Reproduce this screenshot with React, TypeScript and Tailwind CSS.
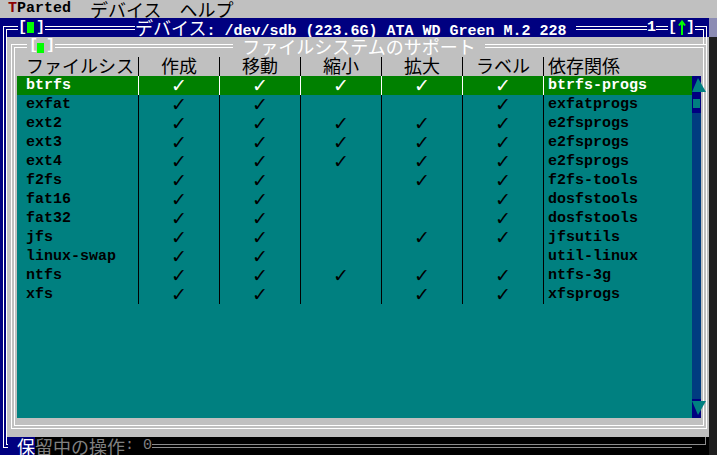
import React from 'react';

const mono = "font-['Liberation_Mono',monospace]";
const jp = "font-['Noto_Sans_CJK_JP',sans-serif]";

type Fs = { name: string; caps: boolean[]; dep: string };

const Y = true;
const N = false;

const rows: Fs[] = [
  { name: 'btrfs', caps: [Y, Y, Y, Y, Y], dep: 'btrfs-progs' },
  { name: 'exfat', caps: [Y, Y, N, N, Y], dep: 'exfatprogs' },
  { name: 'ext2', caps: [Y, Y, Y, Y, Y], dep: 'e2fsprogs' },
  { name: 'ext3', caps: [Y, Y, Y, Y, Y], dep: 'e2fsprogs' },
  { name: 'ext4', caps: [Y, Y, Y, Y, Y], dep: 'e2fsprogs' },
  { name: 'f2fs', caps: [Y, Y, N, Y, Y], dep: 'f2fs-tools' },
  { name: 'fat16', caps: [Y, Y, N, N, Y], dep: 'dosfstools' },
  { name: 'fat32', caps: [Y, Y, N, N, Y], dep: 'dosfstools' },
  { name: 'jfs', caps: [Y, Y, N, Y, Y], dep: 'jfsutils' },
  { name: 'linux-swap', caps: [Y, Y, N, N, N], dep: 'util-linux' },
  { name: 'ntfs', caps: [Y, Y, Y, Y, Y], dep: 'ntfs-3g' },
  { name: 'xfs', caps: [Y, Y, N, Y, Y], dep: 'xfsprogs' },
];

const heads = ['作成', '移動', '縮小', '拡大', 'ラベル'];

// double horizontal line (two 1px lines, 2px gap)
const DLine = ({ className = '' }: { className?: string }) => (
  <div className={`h-[4px] self-start border-y ${className}`} />
);

const Row = ({ fs, selected }: { fs: Fs; selected: boolean }) => {
  const sep = selected ? 'bg-white' : 'bg-black';
  return (
    <div
      className={`flex h-[19px] ${mono} font-bold text-[15px] leading-[19px] ${
        selected ? 'bg-[#008000] text-white' : 'text-black'
      }`}
    >
      <div className="w-[121px] pl-[9px]">{fs.name}</div>
      {fs.caps.map((c, i) => (
        <React.Fragment key={i}>
          <div className={`w-px ${sep}`} />
          <div className="w-[80px] text-center font-['DejaVu_Sans',sans-serif] font-bold text-[19px] leading-[19px]">
            {c ? '✓' : ''}
          </div>
        </React.Fragment>
      ))}
      <div className={`w-px ${sep}`} />
      <div className="flex-1 pl-[4px]">{fs.dep}</div>
    </div>
  );
};

const ScrollBar = () => (
  <div className="w-[9px] flex flex-col bg-[#000080]">
    <div className="h-[19px] flex">
      <svg className="shrink-0 mt-[2px]" width="14" height="15" viewBox="0 0 14 15">
        <polygon points="6,0 14,14 0,14" fill="#008080" />
      </svg>
    </div>
    <div className="h-[18px] pt-[4px] pl-px">
      <div className="w-[7px] h-[9px] bg-[#008080]" />
    </div>
    <div className="flex-1 bg-[#003c80]" />
    <div className="h-px" />
    <div className="h-[18px] flex">
      <svg className="shrink-0 mt-px" width="14" height="15" viewBox="0 0 14 15">
        <polygon points="0,0 14,0 6,14" fill="#008080" />
      </svg>
    </div>
  </div>
);

const Bracket = ({ children }: { children: React.ReactNode }) => (
  <span className={`w-[9px] ${mono} font-bold text-[15px] leading-[19px] text-white`}>{children}</span>
);

export default function App() {
  return (
    <div className="w-[717px] h-[455px] overflow-hidden bg-[#c0c0c0]">
      {/* menu bar */}
      <div className="flex h-[18px] items-center text-black">
        <span className={`pl-[8px] ${mono} font-bold text-[15px] leading-[18px]`}>
          <span className="text-[#8b0000]">T</span>Parted
        </span>
        <span className={`ml-[19px] ${jp} text-[18px] leading-[26px]`}>デバイス</span>
        <span className={`ml-[18px] ${jp} text-[18px] leading-[26px]`}>ヘルプ</span>
      </div>

      <div className="flex h-[437px]">
        {/* device dialog */}
        <div className="w-[709px] flex flex-col">
          {/* title row */}
          <div className="flex h-[19px] bg-[#000080] text-white">
            <div className="w-[3px]" />
            <div className="w-[15px] mt-[8px] flex flex-col border-l border-t border-white">
              <div className="flex-1 ml-[2px] mt-[2px] border-l border-t border-white" />
            </div>
            <Bracket>[</Bracket>
            <div className="w-[9px] pt-[4px]">
              <div className="w-[7px] h-[11px] bg-[#00ff00]" />
            </div>
            <Bracket>]</Bracket>
            <DLine className="w-[90px] mt-[8px] border-white" />
            <div className="flex items-baseline whitespace-pre leading-[19px]">
              <span className={`${jp} text-[18px]`}>デバイス</span>
              <span className={`${mono} font-bold text-[15px]`}>: /dev/sdb (223.6G) ATA WD Green M.2 228 </span>
            </div>
            <DLine className="flex-1 mt-[8px] border-white" />
            <Bracket>1</Bracket>
            <DLine className="w-[12px] mt-[8px] border-white" />
            <Bracket>[</Bracket>
            <div className="w-[9px] flex justify-center pt-[2px]">
              <svg width="8" height="15" viewBox="0 0 8 15">
                <path d="M4 1.5V15M1 5.5L4 1.5L7 5.5" stroke="#00ff00" strokeWidth="2" fill="none" />
              </svg>
            </div>
            <Bracket>]</Bracket>
            <div className="w-[12px] mt-[8px] flex flex-col border-r border-t border-white">
              <div className="flex-1 mr-[2px] mt-[2px] border-r border-t border-white" />
            </div>
            <div className="w-[2px]" />
          </div>

          {/* body */}
          <div className="flex h-[400px]">
            <div className="w-[7px] bg-[#000080]">
              <div className="ml-[3px] w-[4px] h-full border-x border-white" />
            </div>
            <div className="flex-1 flex flex-col">
              <div className="h-[7px] flex justify-end pr-[2px]">
                <div className="w-[4px] border-x border-white" />
              </div>

              {/* filesystem support frame */}
              <div className="relative ml-[4px] mr-[2px] h-[385px] border border-white p-[2px]">
                <div className="absolute -top-[8px] left-[15px] flex h-[18px] bg-[#c0c0c0]">
                  <span className={`w-[9px] pl-[2px] ${mono} font-bold text-[15px] leading-[18px] text-white`}>[</span>
                  <div className="w-[10px] pt-[6px] pl-[1px]">
                    <div className="w-[7px] h-[10px] bg-[#00ff00]" />
                  </div>
                  <span className={`w-[9px] ${mono} font-bold text-[15px] leading-[18px] text-white`}>]</span>
                </div>
                <div className="absolute -top-[8px] left-0 right-0 flex justify-center">
                  <span className={`px-[9px] bg-[#c0c0c0] ${jp} text-[18px] leading-[18px] text-white`}>
                    ファイルシステムのサポート
                  </span>
                </div>

                <div className="h-full border border-white pt-[9px] pl-[2px] pr-[1px]">
                  {/* header */}
                  <div className={`flex h-[19px] w-[675px] text-black ${jp} text-[18px] leading-[17px]`}>
                    <div className="w-[121px] pl-[9px]">ファイルシス</div>
                    {heads.map((h) => (
                      <React.Fragment key={h}>
                        <div className="w-px bg-black" />
                        <div className="w-[80px] text-center">{h}</div>
                      </React.Fragment>
                    ))}
                    <div className="w-px bg-black" />
                    <div className="flex-1 pl-[4px]">依存関係</div>
                  </div>

                  {/* list + scrollbar */}
                  <div className="flex h-[342px]">
                    <div className="w-[675px] bg-[#008080]">
                      {rows.map((fs, i) => (
                        <Row key={fs.name} fs={fs} selected={i === 0} />
                      ))}
                    </div>
                    <ScrollBar />
                  </div>
                </div>
              </div>
            </div>
          </div>

          {/* status row */}
          <div className="flex h-[18px] bg-black">
            <div className="w-[35px] flex bg-[#000080]">
              <div className="ml-[3px] w-[5px] h-[11px] border-l border-b border-white">
                <div className="ml-[2px] h-[8px] border-l border-b border-white" />
              </div>
              <span className={`ml-[9px] ${jp} text-[18px] leading-[18px] text-white`}>保</span>
            </div>
            <span className={`${jp} text-[18px] leading-[18px] text-[#808080]`}>留中の操作</span>
            <span className={`w-[27px] whitespace-pre ${mono} text-[15px] leading-[18px] text-[#808080]`}>: 0</span>
            <DLine className="flex-1 mt-[7px] border-[#8c8c8c]" />
            <div className="w-[14px] h-[8px] border-r border-b border-[#8c8c8c]" />
            <div className="w-[3px]" />
          </div>
        </div>

        {/* right edge strip */}
        <div className="flex-1 flex flex-col">
          <div className="h-[19px] bg-[#8c8cb4]" />
          <div className="flex-1 bg-[#1e1e1e]" />
        </div>
      </div>
    </div>
  );
}
